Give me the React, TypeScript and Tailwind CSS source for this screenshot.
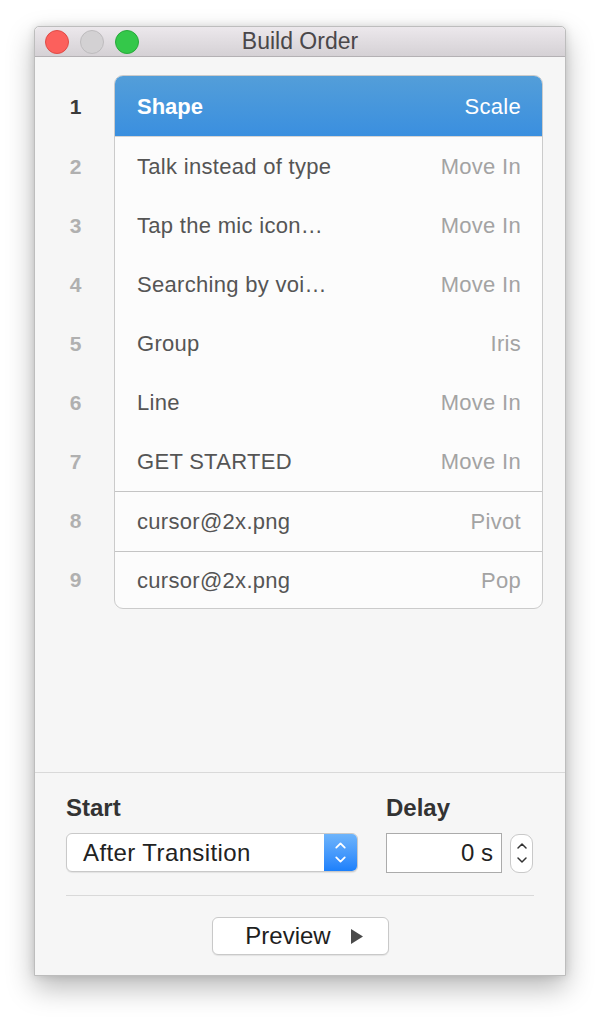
import { ChevronDown, ChevronUp } from 'lucide-react';

type Step = { name: string; effect: string };

const STEPS: Step[] = [
  { name: 'Shape', effect: 'Scale' },
  { name: 'Talk instead of type', effect: 'Move In' },
  { name: 'Tap the mic icon…', effect: 'Move In' },
  { name: 'Searching by voi…', effect: 'Move In' },
  { name: 'Group', effect: 'Iris' },
  { name: 'Line', effect: 'Move In' },
  { name: 'GET STARTED', effect: 'Move In' },
  { name: 'cursor@2x.png', effect: 'Pivot' },
  { name: 'cursor@2x.png', effect: 'Pop' },
];

// rows that start a new build group get a rule above them
const GROUP_STARTS = [7, 8];

const rowHeight = (i: number) =>
  i === 0 ? 'h-[61px]' : i === 7 ? 'h-[60px]' : i === STEPS.length - 1 ? 'h-[57px]' : 'h-[59px]';

const font = { fontFamily: '"Liberation Sans", Arial, sans-serif' };

function TitleBar() {
  return (
    <div className="relative flex h-[30px] shrink-0 items-center border-b border-[#b4b1b4] bg-gradient-to-b from-[#ece8ec] to-[#d5d1d5] rounded-t-[5px]">
      <div className="flex gap-[11px] pl-[10px]">
        <span className="h-6 w-6 rounded-full bg-[#fc605c] border border-[#df4b46]" />
        <span className="h-6 w-6 rounded-full bg-[#d3d1d3] border border-[#bebcbe]" />
        <span className="h-6 w-6 rounded-full bg-[#34c84a] border border-[#28a93b]" />
      </div>
      <span className="absolute inset-x-0 text-center text-[23px] text-[#4a474a] pointer-events-none">
        Build Order
      </span>
    </div>
  );
}

function StepList() {
  return (
    <div className="flex pt-[18px] pr-[22px]">
      <div className="flex w-[79px] shrink-0 flex-col pt-px">
        {STEPS.map((_, i) => (
          <div
            key={i}
            className={`flex ${rowHeight(i)} items-center justify-center pl-[2px] text-[21px] font-bold ${
              i === 0 ? 'text-[#3a3a3a]' : 'text-[#b0b0b0]'
            }`}
          >
            {i + 1}
          </div>
        ))}
      </div>
      <div className="flex-1 overflow-hidden rounded-[9px] border border-[#cbcbcb] bg-[#fcfcfc]">
        {STEPS.map((s, i) => {
          const selected = i === 0;
          const divider = GROUP_STARTS.includes(i);
          return (
            <div
              key={i}
              className={`flex ${rowHeight(i)} items-center justify-between pl-[22px] pr-[21px] text-[22px] tracking-[0.3px] ${
                selected
                  ? 'bg-gradient-to-b from-[#539ed9] to-[#3a8fdf] border-b border-[#d4d4d4]'
                  : divider
                  ? 'border-t border-[#c4c4c4]'
                  : ''
              }`}
            >
              <span className={selected ? 'font-bold tracking-normal text-white' : 'text-[#555555]'}>{s.name}</span>
              <span className={selected ? 'text-white' : 'text-[#a3a3a3]'}>{s.effect}</span>
            </div>
          );
        })}
      </div>
    </div>
  );
}

function Controls() {
  return (
    <div className="flex flex-col border-t border-[#d9d9d9] px-[31px] pt-[23px] pb-5">
      <div className="flex">
        <div className="flex w-[320px] flex-col">
          <span className="h-6 text-[24px] font-bold leading-6 text-[#333333]">Start</span>
          <div className="mt-[13px] flex h-[39px] w-[292px] overflow-hidden rounded-[6px] border border-[#c9c9c9] bg-white shadow-[0_1px_1px_rgba(0,0,0,0.08)]">
            <span className="flex flex-1 items-center pl-4 text-[24px] tracking-[0.4px] text-[#222222]">After Transition</span>
            <span className="flex w-[33px] flex-col items-center justify-center bg-gradient-to-b from-[#6db4fb] to-[#1b80fb] text-white">
              <ChevronUp size={17} strokeWidth={2.5} className="-mb-[3px]" />
              <ChevronDown size={17} strokeWidth={2.5} />
            </span>
          </div>
        </div>
        <div className="flex flex-col">
          <span className="h-6 text-[24px] font-bold leading-6 text-[#333333]">Delay</span>
          <div className="mt-[13px] flex items-center gap-2">
            <div className="flex h-10 w-[116px] items-center justify-end border border-[#ababab] bg-white pr-2 text-[24px] text-[#222222]">
              0 s
            </div>
            <div className="flex h-[39px] w-[23px] flex-col items-center justify-center rounded-[9px] border border-[#c9c9c9] bg-white text-[#333333]">
              <ChevronUp size={16} strokeWidth={2.25} className="-mb-[2px]" />
              <ChevronDown size={16} strokeWidth={2.25} />
            </div>
          </div>
        </div>
      </div>
      <div className="mt-[22px] h-px bg-[#d9d9d9]" />
      <div className="mt-[21px] flex justify-center">
        <button
          type="button"
          className="flex h-[38px] w-[177px] items-center justify-center gap-5 rounded-[6px] border border-[#c9c9c9] bg-white pl-[8px] text-[24px] text-[#1e1e1e] shadow-[0_1px_1px_rgba(0,0,0,0.08)]"
        >
          Preview
          <svg width="12" height="15" viewBox="0 0 12 15">
            <path d="M0 0 L12 7.5 L0 15 Z" fill="#4a4a4a" />
          </svg>
        </button>
      </div>
    </div>
  );
}

export default function App() {
  return (
    <div className="min-h-[1018px] bg-white pt-[26px] pl-[34px]" style={font}>
      <div className="flex h-[950px] w-[532px] flex-col rounded-t-[5px] border border-[#bdbdbd] bg-[#f6f6f6] shadow-[0_12px_28px_rgba(0,0,0,0.28),0_0_8px_rgba(0,0,0,0.12)]">
        <TitleBar />
        <div className="flex-1">
          <StepList />
        </div>
        <Controls />
      </div>
    </div>
  );
}
